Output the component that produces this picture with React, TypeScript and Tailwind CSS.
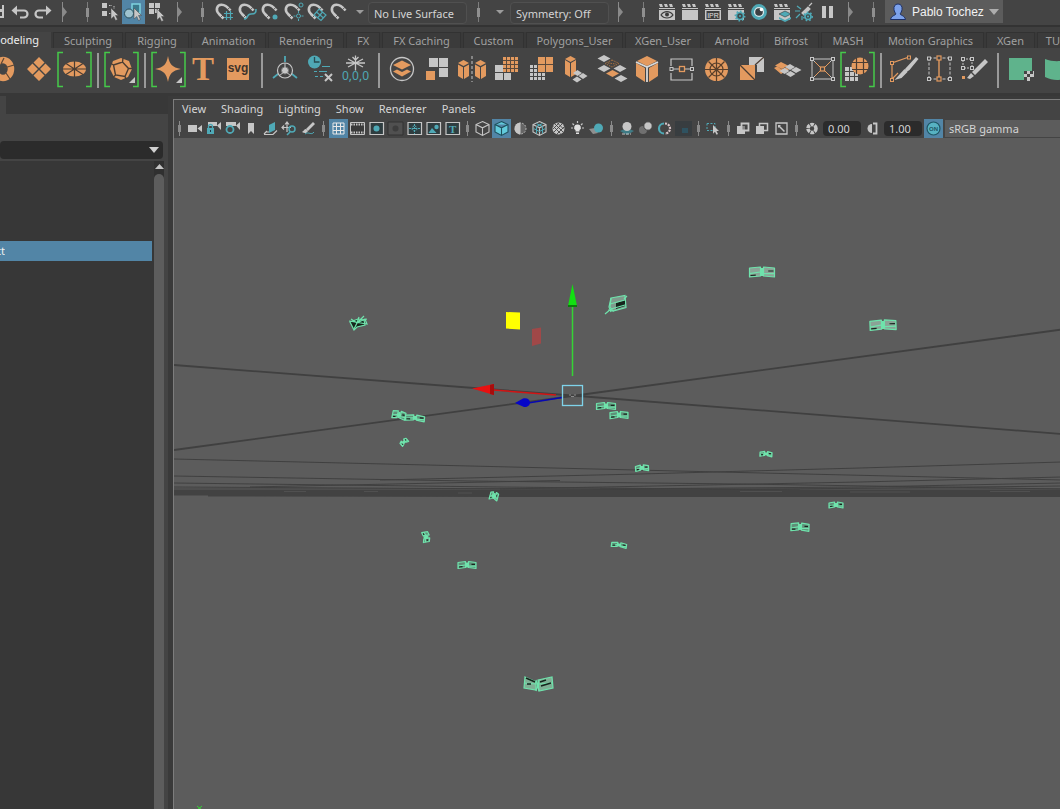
import { useState } from "react";
import type { ReactNode } from "react";
import clsx from "clsx";

const O = "#e39a5f";
const T = "#4fa9b6";
const W = "#c6c6c6";
const D = "#3c3c3c";

/* ---------- small building blocks ---------- */

function Tool({ label, active, children }: { label: string; active?: boolean; children: ReactNode }) {
  return (
    <button aria-label={label} className={clsx("h-6 w-[23px] shrink-0", active && "bg-[#5285a6]")}>
      <svg width="23" height="24" viewBox="0 0 23 24" fill="none" className="block">
        {children}
      </svg>
    </button>
  );
}

function ShelfTool({ label, bracket, children }: { label: string; bracket?: boolean; children: ReactNode }) {
  return (
    <button aria-label={label} className="h-11 w-[35px] shrink-0">
      <svg width="35" height="44" viewBox="0 0 35 44" fill="none" className="block">
        {bracket && <path d="M6 4.500H1V38.500H6M29 4.500H34V38.500H29" stroke="#45c94a" strokeWidth="1.500" />}
        {children}
      </svg>
    </button>
  );
}

function PanelTool({ label, active, children }: { label: string; active?: boolean; children: ReactNode }) {
  return (
    <button aria-label={label} className={clsx("h-[19px] w-[19px] shrink-0", active && "bg-[#5285a6]")}>
      <svg width="19" height="19" viewBox="0 0 19 19" fill="none" className="block">
        {children}
      </svg>
    </button>
  );
}

function Grip() {
  return (
    <svg width="23" height="24" viewBox="0 0 23 24" className="shrink-0">
      <path d="M11 2h1v20h-1z" fill="#7d7d7d" />
      <path d="M10 8h3v9h-3z" fill="#8f8f8f" />
    </svg>
  );
}

function Fold() {
  return (
    <svg width="23" height="24" viewBox="0 0 23 24" className="shrink-0">
      <path d="M9 2h1v20H9zM10 7l4 5-4 5z" fill="#8a8a8a" />
    </svg>
  );
}

function ShelfRule() {
  return (
    <div className="flex h-11 w-3 shrink-0 items-center justify-center">
      <div className="h-[35px] w-0.5 bg-[#9a9a9a]" />
    </div>
  );
}

function PanelGrip() {
  return (
    <svg width="11" height="19" viewBox="0 0 11 19" className="shrink-0">
      <path d="M5 2h1v15H5z" fill="#8a8a8a" />
      <path d="M4 6h3v7H4z" fill="#8a8a8a" />
    </svg>
  );
}

function Caret() {
  return (
    <svg width="8" height="4" viewBox="0 0 8 4" className="shrink-0">
      <path d="M0 0h8L4 4z" fill="#9c9c9c" />
    </svg>
  );
}

function Magnet() {
  return (
    <>
      <path d="M9.500 18.500L5 14C1 9.500 3 5 7.500 4.800C11.500 4.600 14 7.500 16.500 10.500" stroke={W} strokeWidth="2.600" />
      <path d="M6.500 17.500l2.500-2.500M13.500 9.500l2.300-2" stroke="#444" strokeWidth=".8" />
    </>
  );
}

function Clap({ children }: { children?: ReactNode }) {
  return (
    <>
      <path d="M4 4h3l1 3H5zM9 4h3l1 3h-3zM14 4h3l1 3h-3zM4 8h16v1H4z" fill={W} />
      <path d="M4 10h16v10H4z" fill={W} />
      {children}
    </>
  );
}

function Gear({ x, y, r = 3.5 }: { x: number; y: number; r?: number }) {
  return (
    <g>
      <circle cx={x} cy={y} r={r} fill="#3f4a4c" stroke={T} strokeWidth="1.600" />
      <circle cx={x} cy={y} r={r + 1.2} stroke={T} strokeWidth="1.500" strokeDasharray="1.600 2" />
      <circle cx={x} cy={y} r="1.100" fill={T} />
    </g>
  );
}

function Cursor({ x, y }: { x: number; y: number }) {
  return (
    <path
      transform={`translate(${x} ${y})`}
      d="M0 0L7.500 7.500H4.500L6.500 11.500L4.500 12.500L2.800 8.500L0 11z"
      fill={W}
      stroke="#444"
      strokeWidth=".5"
    />
  );
}

/* ---------- status line ---------- */

function StatusLine() {
  const [surface, setSurface] = useState("No Live Surface");
  const [symmetry, setSymmetry] = useState("Symmetry: Off");
  const field =
    "h-[22px] w-[99px] shrink-0 rounded-sm border border-[#505050] bg-[#414141] px-[5px] text-[11px] text-[#d4d4d4] outline-none";

  return (
    <header className="flex h-[25px] items-start overflow-hidden bg-[#444444]">
      <button aria-label="Save scene" className="h-6 w-[7px] shrink-0">
        <svg width="7" height="24" viewBox="0 0 7 24">
          <path d="M0 5h4v13H0z" fill={W} />
          <path d="M0 5h2v4H0zM0 12h2v4H0z" fill="#444" />
        </svg>
      </button>
      <Tool label="Undo">
        <path d="M9 10.500h8a3.500 3.500 0 010 7h-4" stroke={W} strokeWidth="2.200" />
        <path d="M4.500 10.500L10 5.500v10z" fill={W} />
      </Tool>
      <Tool label="Redo">
        <path d="M17 10.500H9a3.500 3.500 0 000 7h4" stroke={W} strokeWidth="2.200" />
        <path d="M21.500 10.500L16 5.500v10z" fill={W} />
      </Tool>
      <Fold />
      <Grip />
      <Tool label="Select by hierarchy">
        <path d="M3 3h5v5H3zM3 11h5v5H3z" fill={W} />
        <path d="M10 5.500h3M15 6v3M10 13.500h2" stroke={W} strokeDasharray="1.500 1" />
        <Cursor x={12} y={8} />
      </Tool>
      <Tool label="Select by object" active>
        <rect x="10" y="4" width="8" height="9" stroke="#7fd3e0" strokeWidth="1.500" fill="#3b7a8c" />
        <circle cx="7" cy="13.500" r="4.500" fill="#9fc3cf" stroke="#2a4f5c" />
        <Cursor x={12} y={8} />
      </Tool>
      <Tool label="Select by component">
        <path d="M4 3h5v5H4zM10 3h5v5h-5zM4 9h5v5H4zM10 9h4v4h-4z" fill={W} />
        <Cursor x={12} y={9} />
      </Tool>
      <Fold />
      <Grip />
      <Tool label="Snap to grids">
        <Magnet />
        <path d="M10 13.500h9M10 17.500h9M12.500 11v9M16.500 11v9" stroke={T} strokeWidth="1.200" />
      </Tool>
      <Tool label="Snap to curves">
        <Magnet />
        <path d="M7 19c5 0 2-5 7-5s5-2 5-5" stroke={T} strokeWidth="1.600" />
      </Tool>
      <Tool label="Snap to points">
        <Magnet />
        <circle cx="15" cy="17" r="2.500" fill={T} />
      </Tool>
      <Tool label="Snap to projected center">
        <Magnet />
        <circle cx="18" cy="5" r="2" stroke={T} />
        <circle cx="15.500" cy="16" r="2" stroke={T} />
        <path d="M15.500 11v2M15.500 19v2M10.500 16h2M18.500 16h2" stroke={T} />
      </Tool>
      <Tool label="Snap to view planes">
        <Magnet />
        <path d="M8 15l5-6 7 6-5 5.500zM10.500 12l7 6M16.500 12l-5 6" stroke={T} strokeWidth="1.200" />
      </Tool>
      <Tool label="Make live">
        <Magnet />
      </Tool>
      <div className="flex h-6 w-4 shrink-0 items-center justify-center">
        <Caret />
      </div>
      <input
        aria-label="Live surface"
        className={clsx(field, "mt-0.5")}
        value={surface}
        onChange={(e) => setSurface(e.target.value)}
      />
      <Grip />
      <div className="flex h-6 w-5 shrink-0 items-center justify-center">
        <Caret />
      </div>
      <input
        aria-label="Symmetry"
        className={clsx(field, "mt-0.5")}
        value={symmetry}
        onChange={(e) => setSymmetry(e.target.value)}
      />
      <Fold />
      <Grip />
      <Tool label="Open render view">
        <Clap>
          <path d="M6 15c3-4.500 9-4.500 12 0-3 4-9 4-12 0z" stroke={D} strokeWidth="1.200" />
          <circle cx="12" cy="14.500" r="2" fill={D} />
        </Clap>
      </Tool>
      <Tool label="Render frame">
        <Clap />
      </Tool>
      <Tool label="IPR render">
        <Clap>
          <path d="M5.500 11h13v8h-13z" fill="#3f3f3f" />
          <text x="12" y="18" textAnchor="middle" fontSize="7" fontFamily="Liberation Sans, sans-serif" fill="#e0e0e0">
            IPR
          </text>
        </Clap>
      </Tool>
      <Tool label="Render settings">
        <Clap>
          <Gear x={16} y={16} />
        </Clap>
      </Tool>
      <Tool label="Hypershade">
        <circle cx="12" cy="12" r="6.500" fill="#d8e6e8" stroke={T} strokeWidth="2.800" />
        <circle cx="12" cy="12" r="3.800" fill="#3b3f42" />
        <circle cx="14.500" cy="9.500" r="1.800" fill="#fff" />
      </Tool>
      <Tool label="Render setup">
        <Clap>
          <path d="M9 14l6-3 6 3-6 3z" fill={T} stroke="#333" strokeWidth=".6" />
          <path d="M9 17l6 3 6-3v2l-6 3-6-3z" fill={T} />
        </Clap>
      </Tool>
      <Tool label="Light editor">
        <path d="M9 13l6-6 2 2-6 6zM16 6l3-3" fill={W} stroke={W} strokeWidth="1.200" />
        <path d="M2 11h5M4 6l4 3M3 18l4-4M9 20v-4" stroke={T} strokeWidth="1.200" />
        <Gear x={15} y={16.5} r={3} />
      </Tool>
      <Tool label="Pause viewport">
        <path d="M6 6h4v12H6zM13 6h4v12h-4z" fill={W} />
      </Tool>
      <Fold />
      <Grip />
      <button className="flex h-[23px] shrink-0 items-center gap-[5px] bg-[#5c5c5c] px-1 font-['Liberation_Sans',sans-serif] text-[12px] text-[#f2f2f2]">
        <svg width="18" height="20" viewBox="0 0 18 20">
          <path
            d="M9 2c3 0 4.500 2.500 4 5.500-.3 2-1.200 3.500-2 4.500 1 1.500 4.500 1.500 5.500 5.500h-15C2.500 13.500 6 13.500 7 12c-.8-1-1.700-2.500-2-4.500C4.500 4.500 6 2 9 2z"
            fill="#7da2ea"
            stroke="#1c2f66"
          />
        </svg>
        Pablo Tochez
        <svg width="10" height="6" viewBox="0 0 10 6">
          <path d="M0 0h10L5 6z" fill="#adadad" />
        </svg>
      </button>
    </header>
  );
}

/* ---------- shelf ---------- */

const tabs = [
  { name: "Sculpting", width: "w-[70px]" },
  { name: "Rigging", width: "w-[64px]" },
  { name: "Animation", width: "w-[75px]" },
  { name: "Rendering", width: "w-[76px]" },
  { name: "FX", width: "w-[34px]" },
  { name: "FX Caching", width: "w-[79px]" },
  { name: "Custom", width: "w-[61px]" },
  { name: "Polygons_User", width: "w-[97px]" },
  { name: "XGen_User", width: "w-[76px]" },
  { name: "Arnold", width: "w-[58px]" },
  { name: "Bifrost", width: "w-[56px]" },
  { name: "MASH", width: "w-[54px]" },
  { name: "Motion Graphics", width: "w-[107px]" },
  { name: "XGen", width: "w-[49px]" },
];

function ShelfTabs() {
  return (
    <div role="tablist" className="flex h-4 gap-0.5 overflow-hidden bg-[#393939] text-[11px] leading-4 text-[#a0a0a0]">
      <button role="tab" aria-selected="true" className="w-[51px] shrink-0 bg-[#444444] pr-3 text-right text-[#eeeeee]">
        odeling
      </button>
      {tabs.map((tab) => (
        <button
          key={tab.name}
          role="tab"
          aria-selected="false"
          className={clsx("shrink-0 border-x border-t border-[#323232] bg-[#3b3b3b] whitespace-nowrap", tab.width)}
        >
          {tab.name}
        </button>
      ))}
      <button role="tab" aria-selected="false" className="min-w-0 flex-1 border-t border-l border-[#323232] bg-[#3b3b3b] text-right">
        TU
      </button>
    </div>
  );
}

function SideCube({ x }: { x: number }) {
  return (
    <g transform={`translate(${x} 0)`}>
      <path d="M0 15l5.500-3 5.500 3-5.500 3zM0 16.500l5 2.800V31l-5-3zM11 16.500l-5 2.800V31l5-3z" fill={O} />
    </g>
  );
}

function Dot({ x, y, c = W }: { x: number; y: number; c?: string }) {
  return <rect x={x - 1.5} y={y - 1.5} width="3" height="3" fill="#444" stroke={c} />;
}

function Shelf() {
  return (
    <div className="flex h-[45px] overflow-hidden bg-[#444444]">
      <button aria-label="Torus" className="flex h-11 w-[22px] shrink-0">
        <svg width="22" height="44" viewBox="0 0 22 44" fill="none">
          <ellipse cx="3" cy="21" rx="8" ry="9" stroke={O} strokeWidth="6.500" />
          <path d="M4 20l10-3M6 25l4 6M1 16l3-6" stroke="#5d4634" strokeWidth="1.200" />
        </svg>
      </button>
      <ShelfTool label="Plane">
        <path d="M17 9l5.500 5.500L17 20l-5.500-5.500zM10.500 15.500L16 21l-5.500 5.500L5 21zM23.500 15.500L29 21l-5.500 5.500L18 21zM17 22l5.500 5.500L17 33l-5.500-5.500z" fill={O} />
      </ShelfTool>
      <ShelfTool label="Disc" bracket>
        <ellipse cx="17.500" cy="21" rx="11.500" ry="7.500" fill={O} />
        <path d="M17.500 13v16M6 21h23M9 15.500l17 11M26 15.500l-17 11" stroke="#4b3d33" strokeWidth="1.200" />
      </ShelfTool>
      <ShelfRule />
      <ShelfTool label="Platonic solid" bracket>
        <path d="M17 10l8 3 3 8-4 8-7 3-7-3-4-8 3-8z" fill={O} />
        <path d="M9.500 17l9-3 6 6.500-3.500 8-9.500-1.500zM18.500 14l.5-4M24.500 20.500h4M21 28.500l1 3M11.500 27L9 29.500M9.500 17L7 15.500" stroke="#4b3d33" strokeWidth="1.400" />
        <path d="M31 29v6h-6z" fill={W} />
      </ShelfTool>
      <ShelfRule />
      <ShelfTool label="Super shape" bracket>
        <path d="M17 8c1.500 8 4 11.500 13 13-9 1.500-11.500 5-13 13-1.500-8-4-11.500-13-13 9-1.500 11.500-5 13-13z" fill={O} />
        <path d="M31 29v6h-6z" fill={W} />
      </ShelfTool>
      <ShelfTool label="Type">
        <text x="17" y="32" textAnchor="middle" fontSize="33" fontWeight="bold" fontFamily="Liberation Serif, serif" fill={O}>
          T
        </text>
      </ShelfTool>
      <ShelfTool label="SVG">
        <path d="M6 10h22v22H6z" fill={O} />
        <text x="17" y="24" textAnchor="middle" fontSize="12" fontWeight="bold" fontFamily="Liberation Sans, sans-serif" fill="#3f342b">
          svg
        </text>
      </ShelfTool>
      <ShelfRule />
      <ShelfTool label="Center pivot">
        <path d="M17 8v6M10 26l-5 4M24 26l5 4" stroke={T} strokeWidth="1.800" />
        <circle cx="17" cy="22.500" r="7.500" stroke={W} strokeWidth="1.200" />
        <circle cx="17" cy="22.500" r="3.500" fill={W} stroke="#777" />
        <path d="M17 15v7M17 23l-6 5M17 23l6 5" stroke={W} />
      </ShelfTool>
      <ShelfTool label="Delete history">
        <circle cx="11.500" cy="14" r="6.500" fill={T} />
        <path d="M11.500 9v5h5" stroke="#294c52" strokeWidth="1.300" />
        <path d="M19 18.500h8M11 23.500h3M16 23.500h8M12 28.500h3M17 28.500h3" stroke={T} strokeWidth="1.200" />
        <path d="M22 26l7 7M29 26l-7 7" stroke={W} strokeWidth="2" />
      </ShelfTool>
      <ShelfTool label="Freeze transformations">
        <path d="M17.500 7.500v15M10 11l15 8M25 11l-15 8M8 15h19M14.500 9l3 3 3-3" stroke={W} strokeWidth="1.300" />
        <text x="17.500" y="32" textAnchor="middle" fontSize="12" fontFamily="Noto Sans, sans-serif" fill={T}>
          0,0,0
        </text>
      </ShelfTool>
      <ShelfRule />
      <ShelfTool label="Combine">
        <circle cx="17" cy="21" r="11.500" stroke={W} strokeWidth="1.300" />
        <path d="M8 17l9-4.500 9 4.500-9 4.500zM8 23.500l4-2 5 2.500 5-2.500 4 2-9 5z" fill={O} />
      </ShelfTool>
      <ShelfTool label="Separate">
        <path d="M9 10h9v9H9zM19 10h9v9h-9zM19 20h9v9h-9z" fill={W} />
        <path d="M6 23h9v9H6z" fill={O} />
      </ShelfTool>
      <ShelfTool label="Mirror">
        <SideCube x={3} />
        <SideCube x={20} />
        <path d="M17 8v26" stroke={W} strokeDasharray="3 2" />
      </ShelfTool>
      <ShelfTool label="Smooth">
        <path d="M5 17h8v7H5zM5 25h8v7H5zM14 25h7v7h-7z" fill={W} />
        <path d="M13 9h15v15H13z" fill={O} />
        <path d="M16.500 9v15M20.500 9v15M24.500 9v15M13 12.500h15M13 16.500h15M13 20.500h15" stroke="#5c4a3c" />
      </ShelfTool>
      <ShelfTool label="Reduce">
        <path d="M5 17h15v15H5z" fill={W} />
        <path d="M8.500 17v15M12.500 17v15M16.500 17v15M5 20.500h15M5 24.500h15M5 28.500h15" stroke="#444" />
        <path d="M13 9h15v15H13z" fill={O} />
        <path d="M20.500 9v15M13 16.500h15" stroke="#5c4a3c" />
      </ShelfTool>
      <ShelfTool label="Extrude">
        <path d="M5 11l5.500-3 5.500 3-5.500 3zM5 12l5 3v14l-5-3zM16 12l-5 3v14l5-3z" fill={O} />
        <path d="M17.500 22l4.500 3-4.500 3-4.500-3zM23 25l4.500 3-4.500 3-4.500-3zM17 28.500l4.500 3-4.500 3-4.500-3z" fill={W} />
      </ShelfTool>
      <ShelfTool label="Bridge">
        <path d="M9 7l6.500 3.500L9 14l-6.500-3.500zM9 17l6.500 3.500L9 24l-6.500-3.500zM25 17l6.500 3.500L25 24l-6.500-3.500zM26 27l6.500 3.500L26 34l-6.500-3.500z" fill={W} />
        <path d="M17.500 22l6.500 3.500-6.500 3.500-6.500-3.500z" fill={O} />
        <path d="M17 12l7 3.500-7 3.500-7-3.500zM13 15l8 1" stroke="#a9713f" strokeDasharray="1.500 1" />
      </ShelfTool>
      <ShelfTool label="Bevel">
        <path d="M17 8l10 5-10 5-10-5z" fill={O} />
        <path d="M6 15l9 5v14l-9-6zM28 15l-9 5v14l9-6z" fill={O} />
        <path d="M6 14l11 5 11-5M17 19v15" stroke="#d9d9d9" strokeWidth="1.800" />
      </ShelfTool>
      <ShelfTool label="Merge">
        <path d="M6 18V11h21v7M6 25v7h21v-7M8 21h6M20 21h6" stroke={W} strokeWidth="1.200" />
        <Dot x={6.5} y={21} />
        <Dot x={27} y={21} />
        <rect x="14.500" y="18.500" width="5" height="5" stroke={O} strokeWidth="1.300" />
      </ShelfTool>
      <ShelfTool label="Fill hole">
        <circle cx="16.500" cy="21.500" r="11.500" fill={O} />
        <circle cx="16.500" cy="21.500" r="6.500" stroke="#5a3f2a" strokeWidth="1.200" />
        <path d="M16.500 10v23M5 21.500h23M8.500 13.500l16 16M24.500 13.500l-16 16" stroke="#5a3f2a" strokeWidth="1.200" />
      </ShelfTool>
      <ShelfTool label="Append to polygon">
        <path d="M14 9h15v15h-7v-7h-8z" fill={W} />
        <path d="M5 17h15v15H5z" fill={O} />
        <path d="M5 17l15 15M20 17l9-8" stroke="#4b3d33" strokeWidth="1.300" />
      </ShelfTool>
      <ShelfTool label="Duplicate face">
        <path d="M11 14l7 3.500-6 3.500-7-3.500zM4 20l3-1.500 5 3 4-2 3 2-8 4.500z" fill={O} />
        <path d="M20 16l5 3-5 3-5-3zM26 19l5.500 3-5.500 3-5-3zM14.500 20l5 3-5 3-5-3zM20.500 23l5 3-5 3-5-3z" fill={W} />
      </ShelfTool>
      <ShelfTool label="Poke">
        <path d="M7 11h21v20H7zM8 12l6 6M27 12l-6 6M8 30l6-6M27 30l-6-6" stroke={W} />
        <path d="M10 14l5 5M25 14l-5 5M10 28l5-5M25 28l-5-5" stroke={O} />
        <Dot x={7} y={11} />
        <Dot x={28} y={11} />
        <Dot x={7} y={31} />
        <Dot x={28} y={31} />
        <rect x="15.500" y="19" width="4" height="4" stroke={O} strokeWidth="1.200" />
      </ShelfTool>
      <ShelfTool label="Project curve" bracket>
        <path d="M5 19h13v14H5z" fill={W} />
        <path d="M9.500 19v14M14.500 19v14M5 23.500h13M5 28.500h13" stroke="#444" />
        <circle cx="20" cy="18" r="8.500" fill={O} />
        <path d="M16.500 10v16M23.500 10v16M12 14.500h16M12 21.500h16" stroke="#4b3d33" strokeWidth="1.200" />
      </ShelfTool>
      <ShelfRule />
      <ShelfTool label="Multi-cut">
        <path d="M5 31V15l17-6M5 31l6-6" stroke={O} strokeWidth="1.200" />
        <Dot x={5} y={15} c={O} />
        <Dot x={22} y={9.5} c={O} />
        <Dot x={5} y={32} c={O} />
        <path d="M29 9l2.500 2-9 11-3 2-1.500-3zM17.500 21l3 3-6 6-7 2z" fill={W} />
      </ShelfTool>
      <ShelfTool label="Insert edge loop">
        <path d="M7 10v21M28 10v21M7 10h21M7 31h21" stroke={W} strokeDasharray="3 1.500" />
        <path d="M17 11v20" stroke={O} strokeWidth="1.400" />
        <Dot x={7} y={10.5} />
        <Dot x={28} y={10.5} />
        <Dot x={7} y={31} />
        <Dot x={28} y={31} />
        <rect x="15" y="8" width="4" height="4" fill="#444" stroke={O} strokeWidth="1.200" />
        <rect x="15" y="29" width="4" height="4" fill="#444" stroke={O} strokeWidth="1.200" />
      </ShelfTool>
      <ShelfTool label="Quad draw">
        <path d="M6 11h9v9H6z" stroke={W} strokeDasharray="2 1" />
        <Dot x={6} y={11} />
        <Dot x={15} y={11} />
        <Dot x={6} y={20} />
        <Dot x={15} y={20} />
        <path d="M28 11l3 3-13 13-3-3zM14 25l3 3-4 3-3-1z" fill={W} />
        <path d="M5 28h3v3H5z" fill={O} />
      </ShelfTool>
      <ShelfRule />
      <ShelfTool label="UV editor">
        <path d="M5 10h23v22H5z" fill="#5fb38c" />
        <path d="M20 23h10v10H20z" fill={W} />
        <path d="M20 23h3v3h-3zM26 23h3v3h-3zM23 26h3v3h-3zM20 29h3v4h-3zM26 29h4v4h-4z" fill="#444" />
      </ShelfTool>
      <ShelfTool label="Cylindrical mapping">
        <path d="M6 11c8 3 16 3 24 0v18c-8 4-16 4-24 0z" fill="#5fb38c" />
      </ShelfTool>
    </div>
  );
}

/* ---------- outliner ---------- */

function Outliner() {
  return (
    <aside className="flex w-[168px] shrink-0 flex-col overflow-hidden bg-[#444444]">
      <div className="h-[18px] shrink-0 bg-[#383838]">
        <div className="h-full w-1.5 bg-[#444444]" />
      </div>
      <div className="relative mt-[27px] h-[18px] w-[163px] shrink-0">
        <select
          aria-label="Search filter"
          className="block h-[18px] w-full appearance-none rounded-sm bg-[#2b2b2b] text-[11px] text-[#cccccc] outline-none"
        />
        <svg width="10" height="6" viewBox="0 0 10 6" className="pointer-events-none absolute top-1.5 right-1">
          <path d="M0 0h10L5 6z" fill="#d0d0d0" />
        </svg>
      </div>
      <div className="mt-0.5 flex min-h-0 w-[164px] flex-1 bg-[#373737]">
        <ul className="flex-1 pt-20">
          <li className="mr-0.5 flex h-5 items-center bg-[#5285a6] text-[11px] text-[#f0f0f0]">
            <span className="flex w-[5px] justify-end overflow-hidden">ct</span>
          </li>
        </ul>
        <div className="flex w-2.5 flex-col items-center bg-[#303030]">
          <svg width="9" height="13" viewBox="0 0 9 13" className="shrink-0">
            <path d="M4.500 3L9 8H0z" fill="#c4c4c4" />
          </svg>
          <div className="w-full flex-1 rounded-t-md bg-[#5d5d5d]" />
        </div>
      </div>
    </aside>
  );
}

/* ---------- viewport panel ---------- */

function Wire({ fill }: { fill?: string }) {
  return (
    <path
      d="M9.500 2.500l6.500 3v7.500l-6.500 3.500-6.500-3.500v-7.500zM3 5.500l6.500 3.300 6.500-3.300M9.500 8.800V16.500"
      fill={fill ?? "none"}
      stroke={fill ? "#1f4f5c" : W}
      strokeWidth="1.100"
    />
  );
}

function Camera() {
  return <path d="M3 6h9v7H3zM12.500 9.500L17 6v7z" fill={W} />;
}

function Frame() {
  return <path d="M3 3.500h13.500v12H3z" fill="#2f3d40" stroke={W} strokeWidth="1.200" />;
}

const menus = ["View", "Shading", "Lighting", "Show", "Renderer", "Panels"];

function PanelBar() {
  const [exposure, setExposure] = useState("0.00");
  const [gamma, setGamma] = useState("1.00");
  const num =
    "mx-0.5 h-[15px] w-[38px] shrink-0 rounded-sm bg-[#2b2b2b] px-[5px] text-[11px] leading-[15px] text-[#d4d4d4] outline-none";

  return (
    <div className="shrink-0 overflow-hidden bg-[#444444]">
      <nav className="flex h-[19px] items-center gap-[15px] pl-2 text-[11px] text-[#d6d6d6]">
        {menus.map((m) => (
          <button key={m}>{m}</button>
        ))}
      </nav>
      <div className="flex h-[19px] items-center">
        <PanelGrip />
        <PanelTool label="Select camera"><Camera /></PanelTool>
        <PanelTool label="Lock camera">
          <path d="M4 3h9v4H4zM13 6.500L17 3v8z" fill={W} />
          <path d="M3 9h7v6H3z" fill={T} />
          <path d="M4.500 9V7.500a2 2 0 014 0V9" stroke={T} strokeWidth="1.300" />
          <path d="M6 11h1v2H6z" fill="#234" />
        </PanelTool>
        <PanelTool label="Camera attributes">
          <path d="M3 3h10v4H3zM13 6.500L17 3v8z" fill={W} />
          <circle cx="7" cy="10.500" r="3.500" fill="#444" stroke={T} strokeWidth="1.800" />
        </PanelTool>
        <PanelTool label="Bookmarks"><path d="M6 4h6v11l-3-3-3 3z" fill={W} /></PanelTool>
        <PanelTool label="Image plane">
          <path d="M8 6l6-3v8l-6 3z" fill={T} />
          <path d="M3 15l3-3M3 15.500h9l4-4M5 13h3" stroke={W} strokeWidth="1.200" />
        </PanelTool>
        <PanelTool label="2D pan zoom">
          <path d="M2 8.500h9M7 4v9M5 5.500L7 3l2 2.500M4 6.500l-2 2 2 2" stroke={W} strokeWidth="1.200" />
          <circle cx="12" cy="10" r="3" stroke={T} strokeWidth="1.500" />
          <path d="M10 13l-3 3" stroke={T} strokeWidth="1.600" />
        </PanelTool>
        <PanelTool label="Grease pencil">
          <path d="M14 3l2 2-7 7-2-2z" fill={W} />
          <path d="M7 10c-2 0-2 2-4 3 3 2 5 1 6-1z" fill={W} />
          <path d="M6 15c4-3 6 2 9-2" stroke={T} />
        </PanelTool>
        <PanelGrip />
        <PanelTool label="Grid" active>
          <path d="M4 4h11v11H4zM7.500 4v11M11.500 4v11M4 7.500h11M4 11.500h11" stroke="#e8e8e8" />
        </PanelTool>
        <PanelTool label="Film gate">
          <path d="M2.500 3.500h14v12h-14z" fill="#3a3a3a" stroke={W} />
          <path d="M3 5.500h13M3 13.500h13" stroke={W} strokeWidth="2" strokeDasharray="1.500 1" />
        </PanelTool>
        <PanelTool label="Resolution gate">
          <Frame />
          <circle cx="9.500" cy="9.500" r="3" fill={T} />
        </PanelTool>
        <PanelTool label="Gate mask">
          <path d="M2 3h15v13H2z" fill="#505050" stroke="#333" />
          <circle cx="9.500" cy="9.500" r="3" fill="#3d3d3d" />
        </PanelTool>
        <PanelTool label="Field chart">
          <Frame />
          <path d="M4 9.500h11M9.500 5v10" stroke={T} strokeDasharray="2 1" />
          <circle cx="9.500" cy="9.500" r="2.500" stroke={T} strokeDasharray="2 1" />
        </PanelTool>
        <PanelTool label="Safe action">
          <Frame />
          <path d="M4.500 14l3.500-5 4.500 5z" fill={T} />
          <circle cx="12.500" cy="8" r="2.200" fill={T} />
        </PanelTool>
        <PanelTool label="Safe title">
          <Frame />
          <text x="9.700" y="13.500" textAnchor="middle" fontSize="11" fontWeight="bold" fontFamily="Liberation Serif, serif" fill={T}>
            T
          </text>
        </PanelTool>
        <PanelGrip />
        <PanelTool label="Wireframe"><Wire /></PanelTool>
        <PanelTool label="Smooth shade all" active><Wire fill="#62cbdc" /></PanelTool>
        <PanelTool label="Default material">
          <circle cx="9.500" cy="9.500" r="5.500" fill="#666" stroke={W} strokeDasharray="1.500 1.500" />
          <path d="M9.500 3.500a6 6 0 000 12z" fill={W} />
        </PanelTool>
        <PanelTool label="Wireframe on shaded">
          <Wire />
          <path d="M6.500 4.500l6 3v7M12.500 4.500l-6 3v7M3.500 9.500l6 3 6-3" stroke={T} />
        </PanelTool>
        <PanelTool label="Textured">
          <circle cx="9.500" cy="9.500" r="6" fill={W} />
          <path d="M6 5l8 8M4.500 7.500l7 7M8.500 4l6 6M13 5l-8 8M10 4l-6 6M15 8l-7 7" stroke="#444" strokeWidth=".9" />
        </PanelTool>
        <PanelTool label="Use all lights">
          <path d="M9.500 5.500a3 3 0 012 5.500v1.500h-4V11a3 3 0 012-5.500zM8 13.500h3V15H8z" fill="#e0e0e0" />
          <path d="M9.500 2v2M3 9h2M14 9h2M4.500 4.500L6 6M14.500 4.500L13 6" stroke={W} strokeWidth="1.200" />
        </PanelTool>
        <PanelTool label="Shadows">
          <path d="M2 10l6-1 3 5-5 1z" fill="#8f8f8f" />
          <circle cx="11.500" cy="9" r="4.500" fill={T} />
        </PanelTool>
        <PanelGrip />
        <PanelTool label="Ambient occlusion">
          <path d="M3 12l7-3 7 3-7 4z" fill="#3f7b85" />
          <circle cx="10" cy="7.500" r="4.500" fill={W} />
          <path d="M5 15h9" stroke={W} strokeDasharray="3 1" />
        </PanelTool>
        <PanelTool label="Motion blur">
          <circle cx="7" cy="11" r="4" fill="#707070" />
          <circle cx="12" cy="7" r="4.200" fill={W} stroke="#444" />
        </PanelTool>
        <PanelTool label="Anti-aliasing">
          <path d="M9 4.500a5 5 0 000 10" stroke={T} strokeWidth="2.200" />
          <path d="M10 4.500a5 5 0 010 10" stroke="#d8c4c8" strokeWidth="2.200" strokeDasharray="2 1" />
        </PanelTool>
        <PanelTool label="Depth of field">
          <path d="M1 2h17v15H1z" fill="#383d40" />
          <path d="M8 9h6v5H8z" fill="#2f5260" />
        </PanelTool>
        <PanelGrip />
        <PanelTool label="Isolate select">
          <path d="M3 4.500h8v7H3z" stroke={T} strokeDasharray="2 1.500" />
          <path d="M9 6l6 6h-2.500l1.500 3-1.500.800-1.500-3-2 2z" fill={W} />
        </PanelTool>
        <PanelGrip />
        <PanelTool label="X-ray">
          <path d="M3 7h8v8H3z" fill={W} />
          <path d="M7.500 4.500h7v7h-7z" fill="#444" fillOpacity=".5" stroke={W} strokeWidth="1.800" />
        </PanelTool>
        <PanelTool label="X-ray joints">
          <path d="M6.500 4.500h8v7h-8z" stroke={W} strokeWidth="1.500" />
          <path d="M3 7h8v8H3z" fill={W} />
        </PanelTool>
        <PanelTool label="X-ray components">
          <path d="M4 4h11v11H4z" stroke={W} strokeWidth="1.300" />
          <path d="M6.500 6.500l6 6" stroke={W} strokeWidth="1.500" />
          <path d="M6 6h3L6 9z" fill={W} />
        </PanelTool>
        <PanelGrip />
        <PanelTool label="Exposure">
          <circle cx="10" cy="9.500" r="4" stroke={W} strokeWidth="3.600" strokeDasharray="3.400 .8" />
        </PanelTool>
        <input aria-label="Exposure value" className={num} value={exposure} onChange={(e) => setExposure(e.target.value)} />
        <PanelTool label="Gamma">
          <path d="M9 5v9a4.500 4.500 0 010-9z" fill={W} />
          <path d="M10 4.500h3.500V14.500H10" stroke={W} strokeWidth="1.800" />
        </PanelTool>
        <input aria-label="Gamma value" className={num} value={gamma} onChange={(e) => setGamma(e.target.value)} />
        <PanelTool label="View transform" active>
          <circle cx="9.500" cy="9.500" r="6.500" fill="#57b2c2" stroke="#1f5664" strokeWidth="1.200" />
          <text x="9.500" y="12" textAnchor="middle" fontSize="6" fontWeight="bold" fontFamily="Liberation Sans, sans-serif" fill="#1f5664">
            ON
          </text>
        </PanelTool>
        <select
          aria-label="Color space"
          className="ml-0.5 h-[17px] min-w-0 flex-1 appearance-none bg-[#5c5c5c] px-1 text-[11px] leading-[17px] text-[#d4d4d4] outline-none"
        >
          <option>sRGB gamma</option>
        </select>
      </div>
    </div>
  );
}

// x, y is the centre of the pair; w and h its overall size
const pairs = [
  { x: 762, y: 272, w: 25, h: 10, r: 0 },
  { x: 883, y: 325, w: 26, h: 10, r: -2 },
  { x: 399, y: 415, w: 13, h: 8, r: 12 },
  { x: 415, y: 418, w: 19, h: 6, r: 5 },
  { x: 404, y: 442, w: 8, h: 5, r: -40 },
  { x: 606, y: 406, w: 19, h: 7, r: 0 },
  { x: 619, y: 415, w: 18, h: 7, r: -1 },
  { x: 642, y: 468, w: 13, h: 6, r: -4 },
  { x: 766, y: 454, w: 12, h: 5, r: 3 },
  { x: 494, y: 496, w: 8, h: 8, r: 15 },
  { x: 836, y: 505, w: 14, h: 6, r: 0 },
  { x: 800, y: 527, w: 18, h: 8, r: 2 },
  { x: 426, y: 537, w: 10, h: 7, r: 80 },
  { x: 619, y: 545, w: 15, h: 5, r: 8 },
  { x: 467, y: 565, w: 18, h: 7, r: 0 },
];

function Pair({ x, y, w, h, r }: (typeof pairs)[0]) {
  const a = w / 2;
  const b = h / 2;
  return (
    <g transform={`translate(${x} ${y}) rotate(${r})`} stroke="#6fe3ac" strokeWidth="1.200" strokeLinejoin="round">
      <path d={`M${-a} ${-b + 1}L-1.500 ${-b}V${b - 1}L${-a} ${b}z`} fill={w > 20 ? "#8aa396" : "#5f8f78"} />
      <path d={`M1.500 ${-b}L${a} ${-b + 1}V${b}L1.500 ${b - 1}z`} fill={w > 20 ? "#8aa396" : "#5f8f78"} />
      <path d={`M-2 0H2M0 ${-b + 1}V${b - 1}`} strokeWidth="2.400" />
      <path d={`M${-a} ${b / 3}L-2 0M2 ${b / 3}H${a}`} />
      <path d={`M${-a + 1} ${b - 1.5}L${-a / 2} ${b - 1.8}M${a / 2} ${-b / 5}H${a - 1}`} stroke="#15251c" />
    </g>
  );
}

function Scene() {
  return (
    <svg className="block h-full w-full bg-[#5c5c5c]" fill="none" role="img" aria-label="Perspective view">
      <g transform="translate(-174 -138)">
        {/* ground grid */}
        <g stroke="#404040">
          <path d="M174 365L572 395.500L1062 434M174 450L572 396L1062 329.500" strokeWidth="1.800" />
          <path
            d="M174 459L470 466L740 472.500L1062 480M380 480L640 474L860 468L1062 462M174 476L470 481L740 484L1062 489M174 483L500 487L800 490M174 487L1062 492M250 487L560 480.500M500 489L860 482L1062 477M600 489L860 487L1062 483M700 490L1062 486M174 489L1062 489"
            strokeWidth="1"
          />
        </g>
        <path d="M174 490H1062V497H560L208 496.500V495.500H174z" fill="#424242" />
        <path d="M284 491.500h22M364 491.500h14M458 493h14M740 491.500h42M850 492h60M990 491.500h40" stroke="#505050" />

        {pairs.map((p) => (
          <Pair key={`${p.x}-${p.y}`} {...p} />
        ))}

        {/* larger tilted pieces */}
        <g stroke="#6fe3ac" strokeWidth="1.200">
          <path d="M350 322l8-3 6 1 1 5-8 2-3 3z" fill="#15251c" />
          <path d="M349 321l18 3-2-5-8 4 7-7M351 319l6 4-3 6M357 322l10-3M359 317l-2 6" />
          <path d="M611 298l14-2.500 1 12-13 3.500-3-4z" fill="#7f9a8c" />
          <path d="M616 303l9-3v6l-9 3z" fill="#15251c" stroke="none" />
          <path d="M605 314l6-5M624 299l3-3M611 298l-2 9 2 5M610 304l15-4M611 309l14-4M608 310l6 1" />
          <path d="M525 677l11 5v8l-12-2zM538 680l14-3 1 11-14 3z" fill="#7faf94" />
          <path d="M536 680l3 11M539 680l-3 11M524 683l12 1M539 684l13-1" />
          <path d="M526 678l9 4M540 682l6-2M541 686l10-3M527 684l4 0" stroke="#15251c" strokeWidth="1.400" />
        </g>

        {/* move manipulator */}
        <path d="M506 312l14 .5v17l-14-1z" fill="#ffff00" />
        <path d="M532 329l9-1.500v16l-9 2.500z" fill="#a04848" />
        <path d="M572.500 376V306" stroke="#35d435" strokeWidth="1.500" />
        <path d="M572.500 284l4.500 22h-9z" fill="#12e012" />
        <path d="M568 305h9v2h-9z" fill="#0a7d0a" />
        <path d="M494 390l62 5" stroke="#d41414" strokeWidth="1.500" />
        <path d="M472 388.500L494 384v11z" fill="#e81010" />
        <path d="M490 385l4-1v11l-4-1z" fill="#a80c0c" />
        <path d="M528 403l34-5.500" stroke="#0808b4" strokeWidth="1.500" />
        <path d="M515 403l8-4.500c4-1 7 1 7 4s-3 5-6 4.500z" fill="#0606c8" />
        <rect x="562.500" y="385.500" width="20" height="20" stroke="#7fd3ea" strokeWidth="1.300" />
        <path d="M569 395h2M574 395h2M571 396.500h3" stroke="#8c8c8c" />

        <path d="M197 806l5 4M202 806l-5 4" stroke="#35d435" />
      </g>
    </svg>
  );
}

export default function App() {
  return (
    <div className="flex h-screen flex-col overflow-hidden bg-[#3a3a3a] font-['Noto_Sans',sans-serif] select-none">
      <StatusLine />
      <div className="h-[7px] shrink-0 border-t-2 border-[#333333] bg-[#3f3f3f]" />
      <ShelfTabs />
      <Shelf />
      <div className="h-[3px] shrink-0 bg-[#383838]" />
      <div className="flex min-h-0 flex-1">
        <Outliner />
        <main className="mt-[3px] ml-[5px] flex min-w-0 flex-1 flex-col border-t border-l border-[#7d7d7d]">
          <PanelBar />
          <div className="min-h-0 flex-1">
            <Scene />
          </div>
        </main>
      </div>
    </div>
  );
}
